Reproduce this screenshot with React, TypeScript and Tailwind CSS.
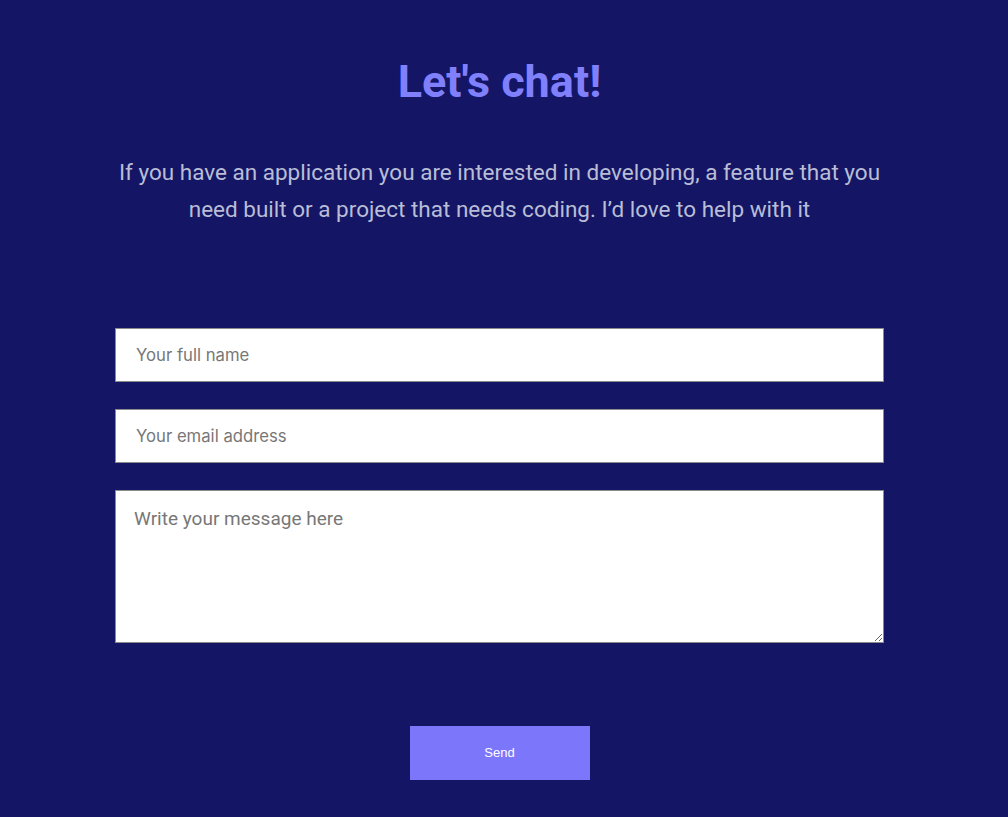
const ContactSection = () => {
  return (
    <main className="min-h-[817px] w-full bg-[#141665] pt-[56px] pb-[37px]">
      <div className="ml-[115px] flex w-[769px] flex-col items-center">
        <h1 className="text-[45px] font-bold leading-[52px] text-[#8080fc] [font-family:Roboto,sans-serif]">Let&#39;s chat!</h1>
        <p className="mt-[46px] w-[790px] text-center text-[22.5px] leading-[37px] text-[#b9bdd6] [font-family:Roboto,sans-serif]">
          If you have an application you are interested in developing, a feature that you need built or a project that needs coding. I&#8217;d love to help with it
        </p>
        <form className="mt-[100px] flex w-full flex-col items-center">
          <input
            type="text"
            placeholder="Your full name"
            className="h-[54px] w-full border border-[#8a8a8a] bg-white px-[20px] text-[16.7px] text-gray-800 placeholder:text-[#777] outline-none [font-family:Inter,sans-serif]"
          />
          <input
            type="email"
            placeholder="Your email address"
            className="mt-[27px] h-[54px] w-full border border-[#8a8a8a] bg-white px-[20px] text-[16.7px] text-gray-800 placeholder:text-[#777] outline-none [font-family:Inter,sans-serif]"
          />
          <textarea
            placeholder="Write your message here"
            className="mt-[27px] h-[153px] w-full border border-[#8a8a8a] bg-white px-[18px] pt-[14px] text-[19px] text-gray-800 placeholder:text-[#777] outline-none [font-family:Roboto,sans-serif]"
          />
          <button
            type="button"
            className="mt-[83px] h-[54px] w-[180px] bg-[#7c76fb] text-[13px] text-white [font-family:'Liberation_Sans',Arial,sans-serif]"
          >
            Send
          </button>
        </form>
      </div>
    </main>
  )
}

export default function App() {
  return <ContactSection />
}
